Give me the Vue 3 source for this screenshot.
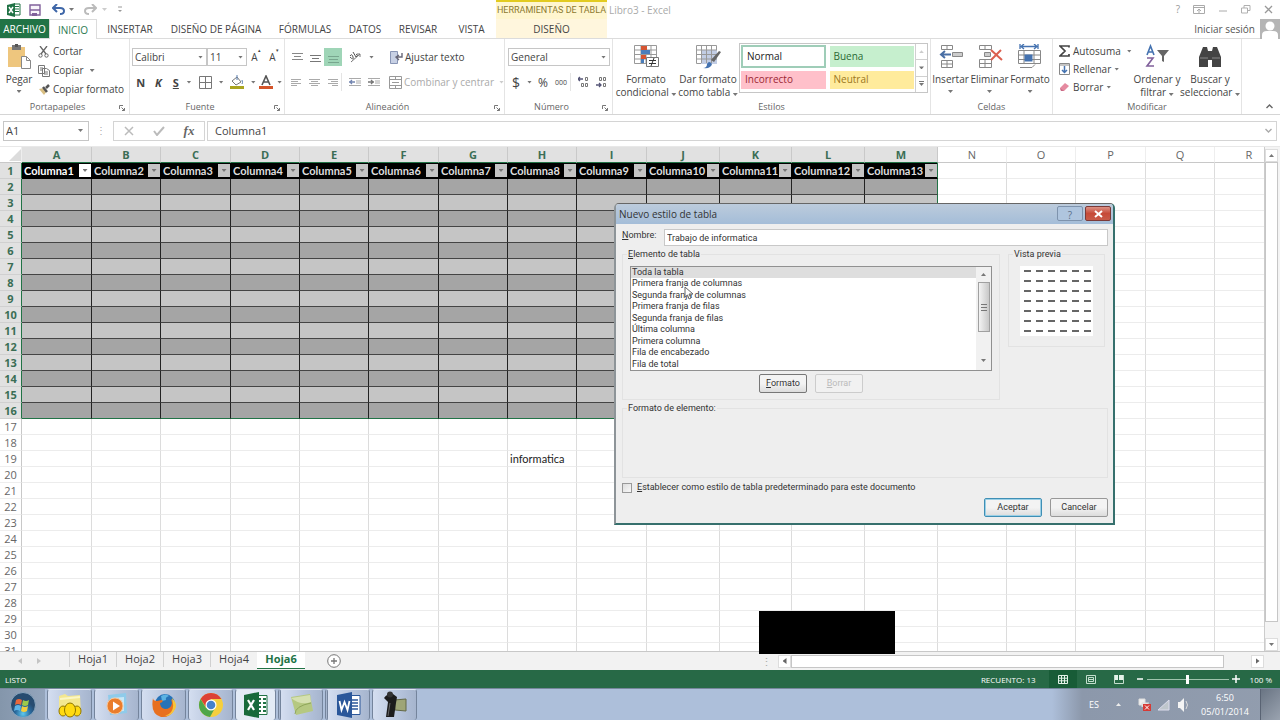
<script setup>
import { ref } from 'vue'

const tabs = [
  { t: 'INSERTAR', w: 66 }, { t: 'DISEÑO DE PÁGINA', w: 106 }, { t: 'FÓRMULAS', w: 72 },
  { t: 'DATOS', w: 48 }, { t: 'REVISAR', w: 58 }, { t: 'VISTA', w: 49 },
]
const widths = [70, 69, 70, 69, 69, 70, 69, 69, 70, 73, 72, 73, 73, 69, 69, 70, 69, 69]
const columns = 'ABCDEFGHIJKLMNOPQR'.split('')
const tableCols = 13
const rows = Array.from({ length: 31 }, (_, i) => i + 1)
const sheets = ['Hoja1', 'Hoja2', 'Hoja3', 'Hoja4', 'Hoja6']
const elements = [
  'Toda la tabla', 'Primera franja de columnas', 'Segunda franja de columnas',
  'Primera franja de filas', 'Segunda franja de filas', 'Última columna',
  'Primera columna', 'Fila de encabezado', 'Fila de total',
]
const selected = ref(0)
const name = ref('Trabajo de informatica')
const formula = ref('Columna1')
const isDefault = ref(false)

function cellClass(r, c) {
  if (r > 16 || c >= tableCols) return ''
  const edge = (c === 0 ? ' first' : '') + (c === tableCols - 1 ? ' last' : '') + (r === 16 ? ' bottom' : '')
  if (r === 1) return 'head' + edge
  return (r % 2 ? 'light' : 'dark') + edge
}
</script>

<template>
  <div class="app">
    <header class="title">
      <div class="qat">
        <svg width="14" height="14" viewBox="0 0 14 14"><path d="M7 1h6v11H7z" fill="#fff" stroke="#207245" /><path d="M8 3.500h4M8 6h4M8 8.500h4" stroke="#207245" /><path d="M0 2l8-2v14l-8-2z" fill="#207245" /><path d="M2 4l4 6M6 4l-4 6" stroke="#fff" stroke-width="1.500" /></svg>
        <svg class="q2" width="12" height="12" viewBox="0 0 12 12"><path d="M1 1h10v10H1z" fill="#f8f4fa" stroke="#80609b" stroke-width="1.400" /><path d="M1 6h10" stroke="#80609b" stroke-width="1.500" /><path d="M3 9h5v3H3z" fill="#80609b" /></svg>
        <svg class="q3" width="13" height="11" viewBox="0 0 13 11"><path d="M2 4h6q4 0 4 3t-4 3" fill="none" stroke="#3f67a8" stroke-width="2" /><path d="M5 0L1 4l4 4" fill="none" stroke="#3f67a8" stroke-width="2" /></svg>
        <i class="dd"></i>
        <svg class="q4" width="13" height="11" viewBox="0 0 13 11"><path d="M11 4H5q-4 0-4 3t4 3" fill="none" stroke="#bbb" stroke-width="2" /><path d="M8 0l4 4-4 4" fill="none" stroke="#bbb" stroke-width="2" /></svg>
        <i class="dd pale"></i>
        <svg class="q5" width="6" height="8" viewBox="0 0 6 8"><path d="M1 1h4" stroke="#999" /><path d="M1 4h4l-2 2z" fill="#999" /></svg>
      </div>
      <div class="ctx-title">HERRAMIENTAS DE TABLA</div>
      <div class="doc">Libro3 - Excel</div>
      <div class="winbtns">
        <span>?</span>
        <svg width="12" height="9" viewBox="0 0 12 9"><path d="M.5.500h11v8H.5zM0 2.500h12M6 8V4M4 6l2-2 2 2" fill="none" stroke="#aaa" /></svg>
        <svg width="10" height="9" viewBox="0 0 10 9"><path d="M1 6h8" stroke="#aaa" /></svg>
        <svg width="10" height="9" viewBox="0 0 10 9"><path d="M3 3V.5h6v5H7M.5 3h6v5h-6z" fill="none" stroke="#b0b0b0" /></svg>
        <svg width="9" height="9" viewBox="0 0 9 9"><path d="M1 1l7 7M8 1L1 8" stroke="#999" stroke-width="1.300" /></svg>
      </div>
    </header>

    <nav class="tabs">
      <button class="file">ARCHIVO</button>
      <button class="tab active">INICIO</button>
      <button v-for="t in tabs" :key="t.t" class="tab" :style="{ width: t.w + 'px' }">{{ t.t }}</button>
      <button class="tab ctx">DISEÑO</button>
      <a class="signin" href="#">Iniciar sesión</a>
      <svg class="avatar" width="20" height="20" viewBox="0 0 20 20"><path d="M0 0h20v20H0z" fill="#b5b5b5" /><circle cx="10" cy="7" r="4.500" fill="#fff" /><path d="M2 20v-4q0-4 5-4h6q5 0 5 4v4z" fill="#fff" /></svg>
    </nav>

    <section class="ribbon">
      <div class="group clip">
        <div class="body">
          <button class="big paste">
            <svg width="24" height="26" viewBox="0 0 24 26"><path d="M1 3h17v20H1z" fill="#eec67e" /><path d="M5 1h9v5H5z" fill="#777" /><path d="M8 0h3v3H8z" fill="#555" /><path d="M14.500 12.500h5l4 4v8h-9z" fill="#fff" stroke="#888" /><path d="M19.500 12.500v4h4" fill="none" stroke="#888" /></svg>
            <span>Pegar</span><i class="dd"></i>
          </button>
          <div class="smalls">
            <button><svg width="12" height="12" viewBox="0 0 12 12"><path d="M2 0l6 8M9 0L3 8" stroke="#666" stroke-width="1.300" /><circle cx="2.500" cy="9.500" r="1.700" fill="none" stroke="#666" /><circle cx="8.500" cy="9.500" r="1.700" fill="none" stroke="#666" /></svg>Cortar</button>
            <button><svg width="12" height="12" viewBox="0 0 12 12"><path d="M.5.500h6v8h-6zM4.500 3.500h4l3 2v6h-7z" fill="#fff" stroke="#777" /><path d="M2 3h3M2 5h2M6 7h4M6 9h4" stroke="#777" /></svg>Copiar <i class="dd far"></i></button>
            <button><svg width="12" height="12" viewBox="0 0 12 12"><path d="M1 5l5 6 3-4-3-3z" fill="#d9bf83" /><path d="M5 3l4 5M8 4l3-3" stroke="#555" stroke-width="2.500" /></svg>Copiar formato</button>
          </div>
        </div>
        <div class="label launch">Portapapeles<svg class="corner" width="6" height="6" viewBox="0 0 6 6"><path d="M.5 4V.5H4M2.500 2.500l3 3M5.500 3v2.500H3" fill="none" stroke="#777" /></svg></div>
      </div>

      <div class="group font">
        <div class="body lines">
          <div class="line">
            <div class="sel f1"><select aria-label="Fuente"><option>Calibri</option></select><i class="dd"></i></div>
            <div class="sel f2"><select aria-label="Tamaño"><option>11</option></select><i class="dd"></i></div>
            <button class="k18">A<sup>▴</sup></button>
            <button class="k18">A<sup>▾</sup></button>
          </div>
          <div class="line l2">
            <button class="k18 bold">N</button><button class="k18 bold ital">K</button><button class="k18 bold und">S</button><button class="k9"><i class="dd"></i></button>
            <button class="k23"><svg width="13" height="13" viewBox="0 0 13 13"><path d="M.5.500h12v12H.5zM6.500 0v13M0 6.500h13" fill="none" stroke="#777" /></svg></button><button class="k9"><i class="dd"></i></button>
            <button class="k23"><svg width="14" height="14" viewBox="0 0 14 14"><path d="M2 6l5-4 4 5-5 3z" fill="#fff" stroke="#777" /><path d="M7 0v5M12 5q1 3 0 4" stroke="#5b7fb0" fill="none" /><path d="M0 11h14v3H0z" fill="#aaa520" /></svg></button><button class="k9"><i class="dd"></i></button>
            <button class="k18"><svg width="14" height="14" viewBox="0 0 14 14"><path d="M3 10l4-9 4 9M4.500 7h5" fill="none" stroke="#555" stroke-width="1.600" /><path d="M0 11h14v3H0z" fill="#d4552a" /></svg></button><button class="k9"><i class="dd"></i></button>
          </div>
        </div>
        <div class="label launch">Fuente<svg class="corner" width="6" height="6" viewBox="0 0 6 6"><path d="M.5 4V.5H4M2.500 2.500l3 3M5.500 3v2.500H3" fill="none" stroke="#777" /></svg></div>
      </div>

      <div class="group align">
        <div class="body lines">
          <div class="line">
            <button class="k18"><svg width="11" height="11" viewBox="0 0 11 11"><path d="M0 1.500h11M2 4.500h7M0 7.500h11" stroke="#888" /></svg></button>
            <button class="k18"><svg width="11" height="11" viewBox="0 0 11 11"><path d="M0 3.500h11M2 6.500h7M0 9.500h11" stroke="#777" /></svg></button>
            <button class="k18 on"><svg width="11" height="11" viewBox="0 0 11 11"><path d="M0 4.500h11M1 7.500h9M0 10.500h11" stroke="#78a68e" /></svg></button>
            <button class="k27"><svg width="13" height="12" viewBox="0 0 13 12"><path d="M2 11l9-8M8 3h3v3" fill="none" stroke="#777" /><path d="M1 5q2-3 3 1t-3 0M4 1l3 5q3-2 0-3" fill="none" stroke="#555" /></svg></button><button class="k9 w22"><i class="dd"></i></button>
            <button class="txt"><svg width="13" height="13" viewBox="0 0 13 13"><path d="M.5.500h7v12h-7z" fill="#c7d0e4" stroke="#8895b5" /><path d="M12 2v4H7M9 4L6 6l3 3" fill="none" stroke="#667" stroke-width="1.400" /></svg>Ajustar texto</button>
          </div>
          <div class="line l2">
            <button class="k18"><svg width="11" height="9" viewBox="0 0 11 9"><path d="M0 1.500h10M0 3.500h7M0 5.500h10M0 7.500h6" stroke="#aaa" /></svg></button>
            <button class="k18"><svg width="11" height="9" viewBox="0 0 11 9"><path d="M0 1.500h11M2 3.500h7M0 5.500h11M2 7.500h7" stroke="#aaa" /></svg></button>
            <button class="k18"><svg width="11" height="9" viewBox="0 0 11 9"><path d="M1 1.500h10M4 3.500h7M1 5.500h10M5 7.500h6" stroke="#aaa" /></svg></button>
            <button class="k27 sepl"><svg width="12" height="10" viewBox="0 0 12 10"><path d="M0 1.500h12M7 4h5M7 6h5M0 8.500h12" stroke="#aaa" /><path d="M0 5h6M3 3L1 5l2 2" fill="none" stroke="#7385b0" stroke-width="1.300" /></svg></button>
            <button class="k9 w22"><svg width="12" height="10" viewBox="0 0 12 10"><path d="M0 1.500h12M7 4h5M7 6h5M0 8.500h12" stroke="#aaa" /><path d="M0 5h6M3 3l2 2-2 2" fill="none" stroke="#777" stroke-width="1.300" /></svg></button>
            <button class="txt off"><svg width="13" height="13" viewBox="0 0 13 13"><path d="M.5.500h12v12H.5zM0 3.500h13M0 9.500h13M6.500 0v3M6.500 10v3M3 6.500h7" fill="none" stroke="#999" /></svg>Combinar y centrar<i class="dd pale"></i></button>
          </div>
        </div>
        <div class="label launch">Alineación<svg class="corner" width="6" height="6" viewBox="0 0 6 6"><path d="M.5 4V.5H4M2.500 2.500l3 3M5.500 3v2.500H3" fill="none" stroke="#777" /></svg></div>
      </div>

      <div class="group num">
        <div class="body lines">
          <div class="line"><div class="sel f3"><select aria-label="Formato de número"><option>General</option></select><i class="dd"></i></div></div>
          <div class="line l2">
            <button class="k18 dollar">$</button><button class="k9"><i class="dd"></i></button><button class="k18 pct">%</button><button class="k18 zeros">000</button>
            <button class="k27 sepl"><svg width="12" height="12" viewBox="0 0 12 12"><path d="M0 3h5M2 1L0 3l2 2" fill="none" stroke="#557" stroke-width="1.300" /><path d="M7.500 1.500h2v3h-2zM3.500 7.500h2v3h-2zM7.500 7.500h2v3h-2z" fill="none" stroke="#777" /></svg></button>
            <button class="k9"><svg width="12" height="12" viewBox="0 0 12 12"><path d="M0 9h5M3 7l2 2-2 2" fill="none" stroke="#557" stroke-width="1.300" /><path d="M3.500 1.500h2v3h-2zM7.500 1.500h2v3h-2zM7.500 7.500h2v3h-2z" fill="none" stroke="#777" /></svg></button>
          </div>
        </div>
        <div class="label launch">Número<svg class="corner" width="6" height="6" viewBox="0 0 6 6"><path d="M.5 4V.5H4M2.500 2.500l3 3M5.500 3v2.500H3" fill="none" stroke="#777" /></svg></div>
      </div>

      <div class="group styles">
        <div class="body">
          <button class="big w62">
            <svg width="26" height="26" viewBox="0 0 26 26"><path d="M1.500 1.500h22v18h-22zM1 6h22M1 10.500h22M1 15h22M8 1v18M13 1v18M18 1v18" fill="none" stroke="#999" /><path d="M8 2h6v4H8zM8 11h5v4H8z" fill="#d65532" /><path d="M8 6h9v4H8zM8 15h3v4H8z" fill="#4a7ebb" /><path d="M13.500 13.500h12v9h-12z" fill="#fff" stroke="#777" /><path d="M16 16.500h7M16 19.500h7M21 14l-3 8" stroke="#333" /></svg>
            <span>Formato</span><span>condicional <i class="dd"></i></span>
          </button>
          <button class="big w62">
            <svg width="26" height="26" viewBox="0 0 26 26"><path d="M1.500 1.500h20v18h-20z" fill="#fff" stroke="#999" /><path d="M6 6h16v14H6z" fill="#c2cde4" /><path d="M1 6h21M1 10.500h21M1 15h21M6.500 1v18M11.500 1v18M16.500 1v18" stroke="#999" /><path d="M24 7l2 1-7 10-3-2z" fill="#666" /><path d="M8 24q4 0 4-4 2-4 5 0-1 5-9 4z" fill="#4472b0" /></svg>
            <span>Dar formato</span><span>como tabla <i class="dd"></i></span>
          </button>
          <div class="gallery">
            <div class="cells"><button class="normal">Normal</button><button class="good">Buena</button><button class="bad">Incorrecto</button><button class="neutral">Neutral</button></div>
            <div class="gscroll"><button aria-label="Arriba"><i class="dd up pale"></i></button><button aria-label="Abajo"><i class="dd"></i></button><button aria-label="Más"><svg width="5" height="6" viewBox="0 0 5 6"><path d="M0 .5h5" stroke="#777" /><path d="M0 2h5L2.500 5z" fill="#777" /></svg></button></div>
          </div>
        </div>
        <div class="label">Estilos</div>
      </div>

      <div class="group cellsg">
        <div class="body">
          <button class="big w38"><svg width="26" height="26" viewBox="0 0 26 26"><path d="M3.500 1.500h11v4h-11zM9 1v4M3.500 16.500h11v7h-11zM9 16v8M3 20h12" fill="none" stroke="#888" /><path d="M14.500 8.500h10v4h-10z" fill="#ccc" stroke="#888" /><path d="M3 10.500h10M7 7l-4 3.500L7 14" fill="none" stroke="#4a6fa5" stroke-width="2" /></svg><span>Insertar</span><i class="dd"></i></button>
          <button class="big w38"><svg width="26" height="26" viewBox="0 0 26 26"><path d="M2.500 1.500h12v4h-12zM8 1v4M2.500 15.500h12v8h-12zM8 15v8M2 19.500h12" fill="none" stroke="#888" /><path d="M7.500 8.500h6v4h-6z" fill="#ccc" stroke="#888" /><path d="M14 6l11 10M24 6L14 16" stroke="#dc604f" stroke-width="2" /></svg><span>Eliminar</span><i class="dd"></i></button>
          <button class="big w42"><svg width="26" height="26" viewBox="0 0 26 26"><path d="M4 2.500h16M7 0L4 2.500 7 5M17 0l3 2.500L17 5M3 0v5M21 0v5" fill="none" stroke="#4472b0" stroke-width="1.300" /><path d="M1.500 6.500h22v13h-22zM1 11h22M1 15.500h22M7 6v14M17 6v14M3 23.500h12l3-3" fill="none" stroke="#888" /><path d="M7.500 10.500h8v7h-8z" fill="#4472b0" /></svg><span>Formato</span><i class="dd"></i></button>
        </div>
        <div class="label">Celdas</div>
      </div>

      <div class="group modify">
        <div class="body">
          <div class="smalls m">
            <button><svg width="11" height="12" viewBox="0 0 11 12"><path d="M10 2.500V1H1l5 5-5 5h9V9" fill="none" stroke="#444" stroke-width="1.700" /></svg>Autosuma <i class="dd far"></i></button>
            <button><svg width="11" height="12" viewBox="0 0 11 12"><path d="M.5.500h10v11H.5z" fill="#fff" stroke="#888" /><path d="M0 2h11" stroke="#888" /><path d="M5.500 3v6M3 7l2.500 2.500L8 7" fill="none" stroke="#4472b0" stroke-width="1.500" /></svg>Rellenar <i class="dd"></i></button>
            <button><svg width="11" height="12" viewBox="0 0 11 12"><path d="M1 7l5-5 4 3-5 5H2z" fill="#e58aa0" /><path d="M1 7l4 3H2z" fill="#c76a85" /></svg>Borrar <i class="dd"></i></button>
          </div>
          <button class="big w52"><svg width="26" height="26" viewBox="0 0 26 26"><path d="M3 11l3.500-9L10 11M4 8h5" fill="none" stroke="#4472b0" stroke-width="1.600" /><path d="M3 14h6l-6 8h7" fill="none" stroke="#80609b" stroke-width="1.600" /><path d="M13 6h12l-5 6v6l-2-1v-5z" fill="#666" /></svg><span>Ordenar y</span><span>filtrar <i class="dd"></i></span></button>
          <button class="big w58"><svg width="26" height="26" viewBox="0 0 26 26"><path d="M2 23V13L6 3h4l1 4h4l1-4h4l4 10v10h-9v-7h-4v7z" fill="#444" /><path d="M3 14h8M15 14h8" stroke="#888" /></svg><span>Buscar y</span><span>seleccionar <i class="dd"></i></span></button>
        </div>
        <div class="label">Modificar</div>
      </div>
      <button class="collapse" aria-label="Contraer la cinta"><svg width="7" height="5" viewBox="0 0 7 5"><path d="M.5 4l3-3 3 3" fill="none" stroke="#666" stroke-width="1.400" /></svg></button>
    </section>

    <section class="fbar">
      <div class="sel namebox"><select aria-label="Cuadro de nombres"><option>A1</option></select><i class="dd"></i></div>
      <span class="vdots">⋮</span>
      <div class="fbtns">
        <button aria-label="Cancelar entrada"><svg width="10" height="10" viewBox="0 0 10 10"><path d="M1 1l8 8M9 1L1 9" stroke="#bbb" stroke-width="1.500" /></svg></button>
        <button aria-label="Introducir"><svg width="12" height="10" viewBox="0 0 12 10"><path d="M1 5l3 4 7-8" fill="none" stroke="#bbb" stroke-width="2" /></svg></button>
        <button class="fx">fx</button>
      </div>
      <div class="formula"><input v-model="formula" aria-label="Barra de fórmulas" /><svg width="7" height="5" viewBox="0 0 7 5"><path d="M.5 1l3 3 3-3" fill="none" stroke="#aaa" stroke-width="1.400" /></svg></div>
    </section>

    <main class="sheet">
      <div class="gridwrap">
        <table class="grid">
          <colgroup><col class="rowcol" /><col v-for="(w, i) in widths" :key="i" :style="{ width: w + 'px' }" /></colgroup>
          <thead>
            <tr><th class="all"><svg width="12" height="12" viewBox="0 0 12 12"><path d="M12 0v12H0z" fill="#dcdcdc" /></svg></th><th v-for="(c, i) in columns" :key="c" :class="{ sel: i < tableCols }">{{ c }}</th></tr>
          </thead>
          <tbody>
            <tr v-for="r in rows" :key="r">
              <th :class="{ sel: r <= 16 }">{{ r }}</th>
              <td v-for="(c, i) in columns" :key="c" :class="cellClass(r, i)">
                <div v-if="r === 1 && i < tableCols" class="hcell"><span>Columna{{ i + 1 }}</span><button :aria-label="'Filtrar Columna' + (i + 1)"><i class="dd"></i></button></div>
                <template v-else-if="r === 19 && c === 'H'">informatica</template>
              </td>
            </tr>
          </tbody>
        </table>
      </div>
      <div class="vscroll"><button aria-label="Subir"><i class="dd up"></i></button><div class="vthumb"></div><button aria-label="Bajar"><i class="dd"></i></button></div>
    </main>

    <section class="sheettabs">
      <div class="arrows"><i class="lf"></i><i class="rt"></i></div>
      <button v-for="s in sheets" :key="s" :class="['st', { cur: s === 'Hoja6' }]">{{ s }}</button>
      <button class="plus" aria-label="Hoja nueva"><svg width="14" height="14" viewBox="0 0 14 14"><circle cx="7" cy="7" r="6.300" fill="#fff" stroke="#777" /><path d="M7 4v6M4 7h6" stroke="#777" stroke-width="1.300" /></svg></button>
      <div class="hscroll"><span class="vdots">⋮</span><button aria-label="Izquierda"><i class="lf d"></i></button><div class="hthumb"></div><div class="htrack"></div><button aria-label="Derecha"><i class="rt d"></i></button></div>
    </section>

    <section class="status">
      <span class="ready">LISTO</span><span class="count">RECUENTO: 13</span>
      <button class="view on" aria-label="Normal"><svg width="10" height="9" viewBox="0 0 10 9"><path d="M.5.500h9v8h-9zM0 3.200h10M0 5.800h10M3.500 0v9M6.500 0v9" fill="none" stroke="#e4f2e9" /></svg></button>
      <button class="view" aria-label="Diseño de página"><svg width="10" height="9" viewBox="0 0 10 9"><path d="M.5.500h9v8h-9zM2.500 2.500h5v4h-5zM3 4.500h4" fill="none" stroke="#c4dece" /></svg></button>
      <button class="view" aria-label="Salto de página"><svg width="10" height="9" viewBox="0 0 10 9"><path d="M0 0h4v5H0zM5 0h5v5H5z" fill="#e4f2e9" /><path d="M.5 0v8.500h9V0" fill="none" stroke="#c4dece" /></svg></button>
      <button class="zb" aria-label="Alejar"><svg width="8" height="8" viewBox="0 0 8 8"><path d="M1 4h6" stroke="#fff" stroke-width="1.500" /></svg></button>
      <input class="zoom" type="range" min="0" max="100" value="50" aria-label="Zoom" />
      <button class="zb" aria-label="Acercar"><svg width="8" height="8" viewBox="0 0 8 8"><path d="M0 4h8M4 0v8" stroke="#fff" stroke-width="1.500" /></svg></button>
      <span class="pcent">100 %</span>
    </section>

    <footer class="taskbar">
      <button class="start" aria-label="Inicio">
        <svg width="28" height="28" viewBox="0 0 28 28"><defs><radialGradient id="orb" cy=".85"><stop offset="0" stop-color="#5fc9ee" /><stop offset=".6" stop-color="#2a6a9e" /><stop offset="1" stop-color="#274c70" /></radialGradient></defs><circle cx="14" cy="14" r="12.500" fill="url(#orb)" stroke="#8aa5bd" /><path d="M7 9q3-2 6 0l-1 5q-3-2-6 0z" fill="#e8683c" /><path d="M14 9q3 2 6 0l-1 5q-3 2-6 0z" fill="#9cc94a" /><path d="M6 15q3-2 6 0l-1 5q-3-2-6 0z" fill="#5db5e8" /><path d="M13 15q3 2 6 0l-1 5q-3 2-6 0z" fill="#f4cd3d" /></svg>
      </button>
      <button class="task" aria-label="Explorador"><svg width="26" height="26" viewBox="0 0 26 26"><path d="M2 4l6-2 3 2 12-1 1 20H2z" fill="#f3e791" /><path d="M3 7l20-2" stroke="#fbf6c4" stroke-width="2" /><g fill="#ffda12" stroke="#8e7500"><ellipse cx="6" cy="19" rx="4" ry="5" /><ellipse cx="20" cy="19" rx="4" ry="5" /><ellipse cx="13" cy="18" rx="5.500" ry="7" /></g></svg></button>
      <button class="task" aria-label="Reproductor"><svg width="26" height="26" viewBox="0 0 26 26"><path d="M4 3l18-2 1 20-17 2z" fill="#8fcbea" /><path d="M7 6l13-1v14l-12 1z" fill="#c9e7f5" /><circle cx="11" cy="14" r="8" fill="#ea7d2c" stroke="#f7c79b" /><path d="M9 9.500v9l7-4.500z" fill="#fff" /></svg></button>
      <button class="task" aria-label="Firefox"><svg width="26" height="26" viewBox="0 0 26 26"><circle cx="14" cy="12" r="10" fill="#2673b8" /><path d="M10 4q5-3 8 0-4 1-3 4l-4 1z" fill="#5bb3e3" /><path d="M2 6q0 3 4 3l5-1q2 2-2 3 0 5 5 6 6 0 7-6l-1-4q6 5 3 11-4 8-13 7Q-1 22 2 6z" fill="#e8701f" /><path d="M21 6q7 7 2 13-3 5-9 5 9-3 8-12z" fill="#f8c63b" /></svg></button>
      <button class="task" aria-label="Chrome"><svg width="26" height="26" viewBox="0 0 26 26"><circle cx="13" cy="13" r="12" fill="#f5cf3d" /><path d="M2.600 7A12 12 0 0 1 23.400 7H13L8 15z" fill="#dc4237" /><path d="M2.600 7A12 12 0 0 0 12 25l5-9-9 0z" fill="#4ea64a" /><circle cx="13" cy="13" r="5.500" fill="#fff" /><circle cx="13" cy="13" r="4.300" fill="#4481cc" /></svg></button>
      <button class="task lit" aria-label="Excel"><svg width="26" height="26" viewBox="0 0 26 26"><path d="M13 3.500h11v19H13z" fill="#fff" stroke="#207245" /><path d="M15 7h3M20 7h3M15 11h3M20 11h3M15 15h3M20 15h3M15 19h3M20 19h3" stroke="#207245" stroke-width="2" /><path d="M1 3l15-3v26L1 23z" fill="#186a3b" /><path d="M5 8l6 10M11 8L5 18" stroke="#fff" stroke-width="2.200" /></svg></button>
      <button class="task dbl" aria-label="Notas"><svg width="26" height="26" viewBox="0 0 26 26"><path d="M2 5l19-3 3 17-17 4z" fill="#b5c881" /><path d="M2 6q10 8 20 4l-1-7z" fill="#d5e0b0" /><path d="M6 22Q6 14 22 11" fill="none" stroke="#8fa65a" /></svg></button>
      <button class="task dbl" aria-label="Word"><svg width="26" height="26" viewBox="0 0 26 26"><path d="M13 3.500h11v19H13z" fill="#fff" stroke="#2b579a" /><path d="M15 8h7M15 11h7M15 14h7M15 17h7" stroke="#2b579a" stroke-width="1.500" /><path d="M1 3l15-3v26L1 23z" fill="#2b579a" /><path d="M3.500 9l2 9 3-8 3 8 2-9" fill="none" stroke="#fff" stroke-width="1.800" /></svg></button>
      <button class="task" aria-label="Cámara"><svg width="26" height="28" viewBox="0 0 26 28"><path d="M12 9l12-1v12l-11-1z" fill="#9ea577" stroke="#636848" /><path d="M2 7q4-5 9-4l4 3-1 6-2 14H4l2-15z" fill="#1c1c1c" /><circle cx="8" cy="3.500" r="3" fill="#333" /><path d="M8 12l-2 13" stroke="#666" /></svg></button>
      <div class="tray">
        <span class="lang">ES</span>
        <i class="dd up w"></i>
        <svg width="14" height="14" viewBox="0 0 14 14"><path d="M1 1h6v6H1zM4 9V5h7" fill="#eee" stroke="#ddd" /><path d="M5 6h8v7H5z" fill="#d63a35" /><path d="M7 7.500l4 4M11 7.500l-4 4" stroke="#fff" /></svg>
        <svg width="14" height="12" viewBox="0 0 14 12"><path d="M1 11L12 1v10z" fill="#bfc6cc" stroke="#dde" /></svg>
        <svg width="14" height="14" viewBox="0 0 14 14"><path d="M2 4h2l4-4v14l-4-4H2z" fill="#f4f4f4" /><path d="M10 3q3 4 0 8" fill="none" stroke="#ddd" /></svg>
        <div class="clock"><span>6:50</span><span>05/01/2014</span></div>
        <button class="peek" aria-label="Mostrar escritorio"></button>
      </div>
    </footer>

    <div class="blackbox"></div>

    <form class="dialog" role="dialog" aria-labelledby="dt" @submit.prevent>
      <div class="dtitle"><span id="dt">Nuevo estilo de tabla</span><button type="button" class="help">?</button><button type="button" class="close" aria-label="Cerrar"><svg width="9" height="8" viewBox="0 0 9 8"><path d="M1 1l7 6M8 1L1 7" stroke="#fff" stroke-width="2" /></svg></button></div>
      <div class="dbody">
        <div class="nrow"><label for="nm"><u>N</u>ombre:</label><input id="nm" v-model="name" /></div>
        <div class="drow">
          <fieldset class="fs el">
            <legend><u>E</u>lemento de tabla</legend>
            <div class="listbox">
              <ul role="listbox" aria-label="Elemento de tabla"><li v-for="(e, i) in elements" :key="e" role="option" :aria-selected="i === selected" :class="{ cur: i === selected }" @click="selected = i">{{ e }}</li></ul>
              <div class="lscroll"><i class="dd up"></i><div class="lthumb"><b></b><b></b><b></b></div><i class="dd"></i></div>
            </div>
            <div class="fbuttons"><button type="button" class="btn strong"><u>F</u>ormato</button><button type="button" class="btn" disabled><u>B</u>orrar</button></div>
          </fieldset>
          <fieldset class="fs prev">
            <legend>Vista previa</legend>
            <div class="preview"><b v-for="n in 42" :key="n"></b></div>
          </fieldset>
        </div>
        <fieldset class="fs fmt"><legend>Formato de elemento:</legend></fieldset>
        <div class="chk"><input id="ck" v-model="isDefault" type="checkbox" /><label for="ck"><u>E</u>stablecer como estilo de tabla predeterminado para este documento</label></div>
        <div class="actions"><button class="btn ok">Aceptar</button><button type="button" class="btn">Cancelar</button></div>
      </div>
    </form>

    <svg class="cursor" width="10" height="14" viewBox="0 0 10 14"><path d="M1 1v10l2.500-2L5 13l2-1-2-4h4z" fill="#fff" stroke="#666" /></svg>
  </div>
</template>

<style>
body { background: #fff; overflow: hidden; }
</style>

<style scoped>
* { box-sizing: border-box; }
.app { position: relative; display: flex; flex-direction: column; height: 100vh; overflow: hidden; background: #fff; color: #444; font: 10px/13px "Open Sans", "Noto Sans", sans-serif; white-space: nowrap; }
button, input, select { font: inherit; color: inherit; border: 0; background: none; padding: 0; margin: 0; border-radius: 0; outline: 0; }
svg { display: block; flex: none; }
.dd { display: inline-block; flex: none; width: 5px; height: 3px; background: #777; clip-path: polygon(0 0, 100% 0, 50% 100%); }
.dd.up { clip-path: polygon(50% 0, 100% 100%, 0 100%); }
.dd.pale { background: #ccc; }
.dd.w { background: #eee; }
.lf, .rt { display: inline-block; width: 4px; height: 6px; background: #c4c4c4; clip-path: polygon(100% 0, 100% 100%, 0 50%); }
.rt { clip-path: polygon(0 0, 100% 50%, 0 100%); }
.d { background: #666; }

.title { display: flex; height: 19px; flex: none; }
.qat { display: flex; align-items: center; width: 496px; padding-left: 7px; }
.q2 { margin-left: 8px; }
.q3 { margin: 0 4px 0 11px; }
.q4 { margin: 0 5px 0 10px; }
.q5 { margin-left: 10px; }
.ctx-title { width: 111px; border-top: 2px solid #e2cb20; background: #fff6cf; text-align: center; color: #8c7a30; font: 9px/17px Roboto, "Open Sans", sans-serif; }
.doc { margin-left: 2px; color: #aaa; font-size: 10px; line-height: 20px; }
.winbtns { display: flex; align-items: center; gap: 13px; margin-left: auto; padding-right: 7px; color: #999; }

.tabs { display: flex; height: 20px; flex: none; border-bottom: 1px solid #dcdcdc; font-size: 10px; line-height: 20px; }
.file { width: 49px; background: #217346; color: #fff; }
.tab.active { width: 48px; height: 20px; border: 1px solid #dcdcdc; border-bottom: 0; background: #fff; color: #2b7a50; }
.tab.ctx { width: 111px; background: #fff6dd; }
.signin { margin-left: auto; margin-right: 5px; color: #555; text-decoration: none; line-height: 20px; }

.ribbon { display: flex; height: 76px; flex: none; border-bottom: 1px solid #d5d5d5; }
.group { display: flex; flex-direction: column; flex: none; border-right: 1px solid #e4e4e4; }
.body { display: flex; height: 62px; padding-top: 3px; }
.label { position: relative; text-align: center; font-size: 9px; line-height: 12px; color: #666; }
.launch { padding-right: 14px; }
.corner { position: absolute; right: 4px; bottom: 2px; }
.clip { width: 130px; } .font { width: 155px; } .align { width: 220px; } .num { width: 108px; } .styles { width: 318px; } .cellsg { width: 122px; } .modify { width: 189px; }
.big { display: flex; flex-direction: column; align-items: center; line-height: 13px; }
.big svg { margin: 2px 0 3px; }
.big > .dd { margin-top: 4px; }
.paste { width: 38px; }
.w62 { width: 62px; } .w38 { width: 39px; } .w42 { width: 42px; } .w52 { width: 52px; } .w58 { width: 54px; }
.styles .body { padding-left: 2px; }
.smalls { display: flex; flex-direction: column; }
.smalls button { display: flex; align-items: center; gap: 3px; height: 19px; }
.smalls.m { width: 72px; margin-left: 6px; }
.smalls.m button { height: 18px; }
.far { margin-left: 3px; }
.lines { flex-direction: column; }
.line { display: flex; align-items: center; height: 30px; padding-left: 2px; }
.l2 { height: 20px; }
.sel { display: grid; flex: none; align-items: center; border: 1px solid #c6c6c6; background: #fff; }
.sel select { grid-area: 1 / 1; appearance: none; width: 100%; padding-left: 2px; }
.sel .dd { grid-area: 1 / 1; justify-self: end; margin-right: 3px; pointer-events: none; }
.f1 { width: 75px; height: 18px; } .f2 { width: 40px; height: 18px; } .f3 { width: 102px; height: 18px; margin-left: 1px; }
.k18, .k9, .k23, .k27 { display: flex; align-items: center; justify-content: center; height: 18px; }
.k18 { width: 18px; } .k9 { width: 9px; } .k23 { width: 24px; } .k27 { width: 27px; } .w22 { width: 13px; justify-content: flex-start; }
sup { font-size: 5px; line-height: 5px; align-self: flex-start; }
.bold { font-weight: 700; font-size: 11px; } .ital { font-style: italic; } .und { text-decoration: underline; }
.on { background: #9fd5b7; }
.txt { display: flex; align-items: center; gap: 2px; margin-left: 8px; }
.off { color: #aaa; } .off .dd { margin-left: 3px; }
.align .line { padding-left: 3px; }
.sepl { border-left: 1px solid #e4e4e4; }
.dollar { font-size: 14px; } .pct { font-size: 12px; } .zeros { font-size: 7px; }
.gallery { display: flex; width: 189px; height: 50px; margin: 1px 0 0; border: 1px solid #c6c6c6; }
.cells { display: grid; flex: 1; grid-template-columns: 1fr 1fr; gap: 2px 4px; padding: 1px 1px 2px; }
.cells button { padding-left: 4px; text-align: left; margin: 1px 0; }
.cells .normal { border: 2px solid #9fcdb8; color: #222; margin: 0; }
.good { background: #c6efce; color: #2b6a35; } .bad { background: #ffc0ca; color: #9c2734; } .neutral { background: #ffeb9c; color: #9c7620; }
.gscroll { display: flex; flex-direction: column; width: 12px; border-left: 1px solid #d0d0d0; }
.gscroll button { display: grid; place-items: center; flex: 1; }
.gscroll button + button { border-top: 1px solid #d0d0d0; }
.collapse { align-self: flex-end; margin: 0 7px 5px auto; }

.fbar { display: flex; align-items: center; height: 32px; flex: none; padding: 0 3px; border-bottom: 1px solid #e8e8e8; }
.namebox { width: 86px; height: 20px; } .namebox select { font-size: 11px; } .namebox .dd { margin-right: 5px; }
.vdots { width: 24px; text-align: center; color: #aaa; }
.fbtns { display: flex; align-items: center; justify-content: space-around; width: 92px; height: 20px; border: 1px solid #d4d4d4; }
.fx { font: italic 700 13px "Liberation Serif", serif; color: #666; }
.formula { display: flex; align-items: center; flex: 1; height: 20px; margin-left: 2px; padding: 0 4px 0 7px; border: 1px solid #d4d4d4; font-size: 11px; }
.formula input { flex: 1; min-width: 0; }

.sheet { display: flex; flex: 1; min-height: 0; }
.gridwrap { flex: 1; min-width: 0; overflow: hidden; border-right: 1px solid #ccc; }
.grid { width: 100%; table-layout: fixed; border-collapse: separate; border-spacing: 0; font-size: 11px; line-height: 14px; }
.rowcol { width: 22px; }
.grid th, .grid td { height: 16px; padding: 1px 0 0; overflow: hidden; }
.grid th { font-weight: 400; color: #666; text-align: center; }
.grid thead th { border-bottom: 1px solid #c8c8c8; border-right: 1px solid #eee; }
.grid thead th.sel { display: table-cell; background: #e1e1e1; color: #3b6e55; font-weight: 700; border-color: #c9c9c9; border-bottom-color: #217346; border-width: 0 1px 1px 0; }
.all svg { margin-left: auto; }
.grid tbody th { border-right: 1px solid #c8c8c8; border-bottom: 1px solid #eee; }
.grid tbody th.sel { display: table-cell; background: #e1e1e1; color: #3b6e55; font-weight: 700; border-width: 0 1px 1px 0; border-right-color: #217346; border-bottom-color: #d0d0d0; }
.grid td { border-right: 1px solid #dcdcdc; border-bottom: 1px solid #ececec; padding-left: 2px; color: #222; font-family: Lato, "Open Sans", sans-serif; }
.grid td.dark { background: #a5a5a5; border-color: #333 #222 #444; }
.grid td.light { background: #c5c5c5; border-color: #333 #222 #444; }
.grid td.head { background: #000; border-color: #000; padding-left: 2px; }
.grid td.last { border-right-color: #217346; }
.grid td.bottom { border-bottom-color: #217346; }
.hcell { display: flex; height: 14px; color: #ddd; font-weight: 700; font-size: 11px; }
.hcell span { flex: 1; min-width: 0; }
.hcell button { display: grid; place-items: center; flex: none; width: 12px; height: 13px; background: #c4c4c4; }
.first .hcell { color: #fff; } .first .hcell button { background: #fff; }
.vscroll { display: flex; flex-direction: column; width: 15px; padding: 2px 2px 0 0; background: #f4f4f4; }
.vscroll button { display: grid; place-items: center; height: 13px; border: 1px solid #ddd; background: #fff; }
.vthumb { flex: 1; margin-bottom: 16px; border: 1px solid #c6c6c6; background: #fff; }

.sheettabs { display: flex; height: 19px; flex: none; background: #f2f2f2; border-top: 1px solid #c8c8c8; font-size: 11px; }
.arrows { display: flex; align-items: center; gap: 15px; width: 69px; padding-left: 18px; }
.st { width: 47px; height: 15px; border-left: 1px solid #d0d0d0; line-height: 12px; padding-bottom: 2px; }
.st.cur { width: 48px; height: 17px; background: #fff; border: 0; border-bottom: 1px solid #217346; color: #217346; font-weight: 700; padding-bottom: 3px; }
.plus { margin: 2px 0 0 22px; height: 14px; }
.hscroll { display: flex; align-items: center; flex: 1; margin-left: 413px; padding-right: 16px; }
.hscroll button { display: grid; place-items: center; width: 13px; height: 13px; border: 1px solid #ddd; background: #fff; }
.hthumb { flex: 1; height: 13px; border: 1px solid #c6c6c6; background: #fff; }
.htrack { width: 27px; }

.status { display: flex; align-items: center; height: 18px; flex: none; background: #276946; color: #fff; font-size: 8px; padding: 0 8px 0 5px; }
.count { margin: 0 13px 0 auto; }
.view { display: grid; place-items: center; width: 28px; height: 18px; }
.view.on { background: #185c37; }
.zb { width: 8px; height: 8px; margin: 0 3px; }
.zoom { appearance: none; width: 82px; height: 9px; background: linear-gradient(#9fc3ad, #9fc3ad) center / 100% 1px no-repeat; }
.zoom::-webkit-slider-thumb { appearance: none; width: 3px; height: 9px; background: #fff; }
.pcent { margin-left: 7px; }

.taskbar { display: flex; height: 32px; flex: none; border-top: 1px solid #76879c; background: #adbfda; }
.start { display: grid; place-items: center; width: 45px; background: linear-gradient(90deg, #8496ab, #94a5bc); }
.task { display: grid; place-items: center; width: 45px; margin-left: 2px; border: 1px solid #74849c; border-top-color: #dfe7f3; border-bottom: 0; border-radius: 3px; background: linear-gradient(90deg, #d4def0, #b6c4dc 60%, #a6b5ce); }
.task.lit { background: #e3ebf6; width: 41px; }
.task.dbl { border-left: 3px double #74849c; }
.tray { display: flex; align-items: center; gap: 5px; margin-left: auto; padding-left: 37px; background: linear-gradient(90deg, #adbfda, #8c98ab 30px, #929dae); color: #fff; font-size: 9px; }
.lang { margin-right: 12px; } .tray .w { margin-right: 12px; }
.clock { display: flex; flex-direction: column; align-items: center; width: 60px; line-height: 14px; }
.peek { width: 20px; height: 31px; border-left: 1px solid #596373; background: linear-gradient(135deg, #697483, #9aa3b0); }

.blackbox { position: absolute; left: 759px; top: 611px; width: 136px; height: 43px; background: #000; }
.cursor { position: absolute; left: 684px; top: 286px; }

.dialog { position: absolute; left: 614px; top: 203px; width: 501px; border: 2px solid #36706d; border-left-color: #8d9498; border-top: 1px solid #666; border-radius: 5px 5px 0 0; background: #eee; color: #333; font: 9px/11px Roboto, "Open Sans", sans-serif; overflow: hidden; }
.dtitle { display: flex; height: 20px; padding: 2px 2px 0 3px; background: linear-gradient(#bccbdc, #a4bdd8); font-size: 10px; line-height: 16px; font-family: "Open Sans", sans-serif; }
.dtitle span { flex: 1; }
.help, .close { display: grid; place-items: center; width: 26px; height: 15px; border: 1px solid #7e93ad; border-radius: 2px; background: #afc5de; }
.help { color: #5d718a; }
.close { margin-left: 2px; border-color: #7c3a38; background: linear-gradient(#dc9185, #c64a38 50%, #c85a48); }
.dbody { padding: 5px 5px 6px 6px; }
.nrow { display: flex; }
.nrow label { width: 42px; padding-top: 1px; }
.nrow input { flex: 1; height: 17px; padding-left: 2px; border: 1px solid #c8c8c8; background: #fff; }
.drow { display: flex; align-items: flex-start; gap: 8px; margin-top: 3px; padding-right: 3px; }
.fs { min-width: 0; margin: 0; padding: 0; border: 1px solid #e2e2e2; }
.fs legend { margin-left: 4px; padding: 0 1px; }
.el { flex: 1; height: 151px; padding: 6px 7px; }
.fs.el legend { margin-left: -3px; }
.listbox { display: flex; height: 105px; border: 1px solid #909090; background: #fff; }
.listbox ul { display: grid; flex: 1; grid-auto-rows: 1fr; margin: 0; padding: 0; list-style: none; }
.listbox li { padding-left: 1px; } .listbox .cur { background: #dedede; }
.lscroll { display: flex; flex-direction: column; align-items: center; width: 15px; padding: 6px 0; background: #f1f1f1; }
.lthumb { display: grid; align-content: center; justify-items: center; gap: 2px; width: 12px; height: 50px; margin: 6px 0 27px; border: 1px solid #a0a0a0; background: linear-gradient(90deg, #f3f3f3, #c8c8c8); }
.lthumb b { width: 6px; height: 1px; background: #777; }
.fbuttons { display: flex; gap: 8px; margin: 3px 0 0 129px; }
.btn { width: 48px; height: 19px; border: 1px solid #989898; border-radius: 2px; background: linear-gradient(#f3f3f3 50%, #dcdcdc); }
.btn:disabled { border-color: #ccc; background: #f1f1f1; color: #bbb; }
.strong { border-color: #777; }
.prev { width: 97px; height: 98px; padding: 6px 11px; }
.fs.prev legend { margin-left: -7px; }
.preview { display: grid; grid-template-columns: repeat(6, 12px); grid-auto-rows: 10px; place-items: center; padding: 0 1px; background: #fff; }
.preview b { width: 7px; height: 2px; background: #666; }
.fmt { height: 75px; margin-top: 3px; }
.chk { display: flex; align-items: center; gap: 5px; margin-top: 4px; }
.chk input { appearance: none; width: 10px; height: 10px; border: 1px solid #999; background: linear-gradient(135deg, #ddd, #f8f8f8); }
.actions { display: flex; justify-content: flex-end; gap: 8px; margin-top: 5px; }
.actions .btn { width: 58px; }
.ok { border-color: #3f8fb5; box-shadow: inset 0 0 0 1px #9bd0e6; }
</style>
